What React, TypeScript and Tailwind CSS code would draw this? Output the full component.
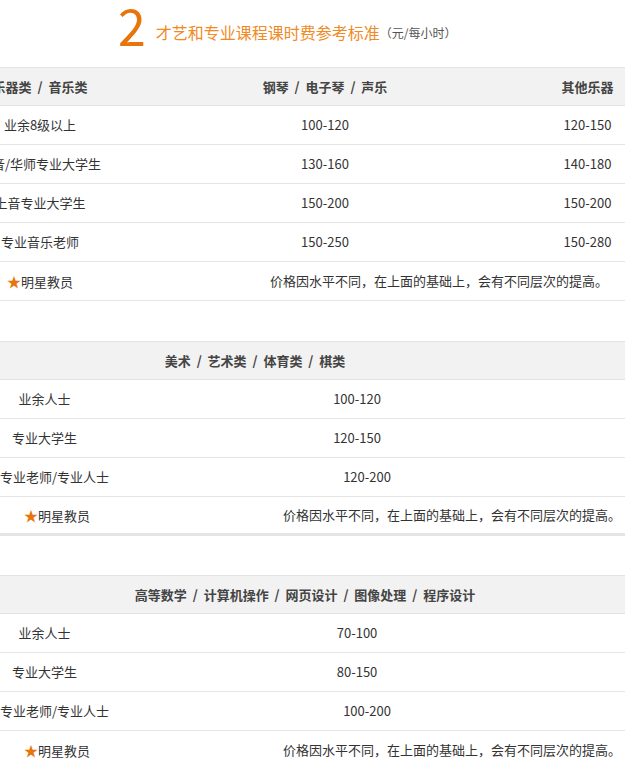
const F = { fontFamily: '"Noto Sans CJK SC","Liberation Sans",sans-serif' };

function Star() {
  return <span className="text-[#e8740c] text-[14px]">★</span>;
}

export default function App() {
  const t1 = [
    ["业余8级以上", "100-120", "120-150"],
    ["古音/华师专业大学生", "130-160", "140-180"],
    ["上音专业大学生", "150-200", "150-200"],
    ["专业音乐老师", "150-250", "150-280"],
  ];
  const t2 = [
    ["业余人士", "100-120"],
    ["专业大学生", "120-150"],
    ["专业老师/专业人士", "120-200"],
  ];
  const t3 = [
    ["业余人士", "70-100"],
    ["专业大学生", "80-150"],
    ["专业老师/专业人士", "100-200"],
  ];
  const note = "价格因水平不同，在上面的基础上，会有不同层次的提高。";
  const row = "h-[39px] flex items-center border-b border-[#e5e5e5] text-[13px] text-[#333] whitespace-nowrap";
  const head = "h-[39px] flex items-center bg-[#f2f2f2] border-y border-[#e3e3e3] text-[13px] font-bold text-[#444] whitespace-pre";
  return (
    <div className="w-[625px] h-[765px] overflow-hidden bg-white" style={F}>
      <div className="h-[67px] flex items-start pl-[118px] whitespace-nowrap">
        <span className="text-[#e8740c] text-[50px] leading-[48px] font-['Liberation_Sans']">2</span>
        <span className="ml-[10px] mt-[20px] text-[#f08a24] text-[16px]">才艺和专业课程课时费参考标准</span>
        <span className="mt-[24px] text-[12px] text-[#555]">（元/每小时）</span>
      </div>

      <div className="ml-[-60px] w-[725px]">
        <div className={head}>
          <div className="w-[200px] text-center">乐器类  /  音乐类</div>
          <div className="w-[370px] text-center">钢琴  /  电子琴  /  声乐</div>
          <div className="w-[155px] text-center">其他乐器</div>
        </div>
        {t1.map((r) => (
          <div key={r[0]} className={row}>
            <div className="w-[200px] text-center">{r[0]}</div>
            <div className="w-[370px] text-center">{r[1]}</div>
            <div className="w-[155px] text-center">{r[2]}</div>
          </div>
        ))}
        <div className={row}>
          <div className="w-[200px] text-center"><Star />明星教员</div>
          <div className="w-[525px] text-right pr-[57px]">{note}</div>
        </div>
      </div>

      <div className="mt-[40px]">
        <div className={head}>
          <div className="w-[510px] text-center">美术  /  艺术类  /  体育类  /  棋类</div>
        </div>
        {t2.map((r) => (
          <div key={r[0]} className={row}>
            <div className="w-[114px] text-center">{r[0]}</div>
            <div className="w-[686px] text-center">{r[1]}</div>
          </div>
        ))}
        <div className={row + " border-b-[3px]"}>
          <div className="w-[114px] text-center"><Star />明星教员</div>
          <div className="w-[511px] text-right pr-[4px]">{note}</div>
        </div>
      </div>

      <div className="mt-[39px]">
        <div className={head}>
          <div className="w-[610px] text-center">高等数学  /  计算机操作  /  网页设计  /  图像处理  /  程序设计</div>
        </div>
        {t3.map((r) => (
          <div key={r[0]} className={row}>
            <div className="w-[114px] text-center">{r[0]}</div>
            <div className="w-[686px] text-center">{r[1]}</div>
          </div>
        ))}
        <div className={row}>
          <div className="w-[114px] text-center"><Star />明星教员</div>
          <div className="w-[511px] text-right pr-[4px]">{note}</div>
        </div>
      </div>
    </div>
  );
}
